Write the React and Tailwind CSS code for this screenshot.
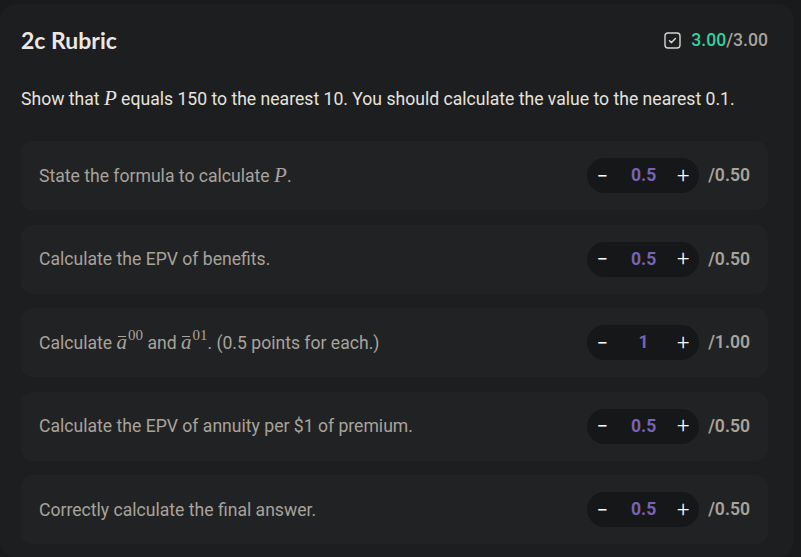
import React from 'react';

const items = [
  { id: 1, value: '0.5', max: '/0.50' },
  { id: 2, value: '0.5', max: '/0.50' },
  { id: 3, value: '1', max: '/1.00' },
  { id: 4, value: '0.5', max: '/0.50' },
  { id: 5, value: '0.5', max: '/0.50' },
];

function MathVar({ children }) {
  return <span className="font-['Liberation_Serif',serif] italic text-[21px] leading-none">{children}</span>;
}

function ABar({ sup }) {
  return (
    <span className="font-['Liberation_Serif',serif] text-[21px] leading-none">
      <span className="italic relative inline-block">
        <span className="absolute left-[1px] right-[1px] top-[4px] h-px bg-[#a8a39b]"></span>
        a
      </span>
      <sup className="text-[15px] -top-[0.55em] ml-[1px]">{sup}</sup>
    </span>
  );
}

function Label({ id }) {
  if (id === 1) return <>State the formula to calculate <MathVar>P</MathVar>.</>;
  if (id === 2) return <>Calculate the EPV of benefits.</>;
  if (id === 3) return <>Calculate <ABar sup="00" /> and <ABar sup="01" />. (0.5 points for each.)</>;
  if (id === 4) return <>Calculate the EPV of annuity per $1 of premium.</>;
  return <>Correctly calculate the final answer.</>;
}

export default function App() {
  return (
    <div className="min-h-screen bg-[#191a1b] pt-[4px] pr-[7px] font-['Roboto',sans-serif]">
      <div className="bg-[#1d1e20] rounded-2xl pl-[21px] pr-[26px] pt-[23px] h-[553px]">
        {/* Header */}
        <div className="flex items-center justify-between h-[26px]">
          <h1 className="font-['Lato',sans-serif] font-bold text-[23px] leading-none text-[#ebe8e3]">2c Rubric</h1>
          <div className="flex items-center gap-[10px] text-[17.6px] font-medium">
            <svg width="17" height="17" viewBox="0 0 17 17" fill="none">
              <rect x="1" y="1" width="15" height="15" rx="3" stroke="#d8d5d0" strokeWidth="1.4" />
              <path d="M5.5 8.8 L7.5 10.6 L11.4 6.6" stroke="#d8d5d0" strokeWidth="1.5" strokeLinecap="round" strokeLinejoin="round" />
            </svg>
            <span>
              <span className="text-[#34d399]">3.00</span>
              <span className="text-[#a8a39b]">/3.00</span>
            </span>
          </div>
        </div>

        <p className="mt-[34px] h-[24px] leading-[24px] text-[17.6px] text-[#e6e3de]">
          Show that <MathVar>P</MathVar> equals 150 to the nearest 10. You should calculate the value to the nearest 0.1.
        </p>

        {/* Rubric items */}
        <div className="mt-[30px] flex flex-col gap-[14.5px]">
          {items.map(item => (
            <div key={item.id} className="h-[69px] bg-[#212224] rounded-xl flex items-center justify-between pl-[18px] pr-[18px]">
              <div className="text-[17.6px] leading-[24px] text-[#a8a39b]">
                <Label id={item.id} />
              </div>
              <div className="flex items-center gap-[9px]">
                <div className="flex items-center justify-between h-[35px] w-[112px] px-[9px] rounded-full bg-[#161718] text-white">
                  <span className="w-[12px] text-center text-[20px] leading-none">−</span>
                  <span className="pl-[3px] text-[17.6px] font-bold text-[#7763b4]">{item.value}</span>
                  <span className="w-[14px] text-center text-[22px] font-light leading-none">+</span>
                </div>
                <span className="text-[17.6px] font-semibold text-[#a8a39b]">{item.max}</span>
              </div>
            </div>
          ))}
        </div>
      </div>
    </div>
  );
}
